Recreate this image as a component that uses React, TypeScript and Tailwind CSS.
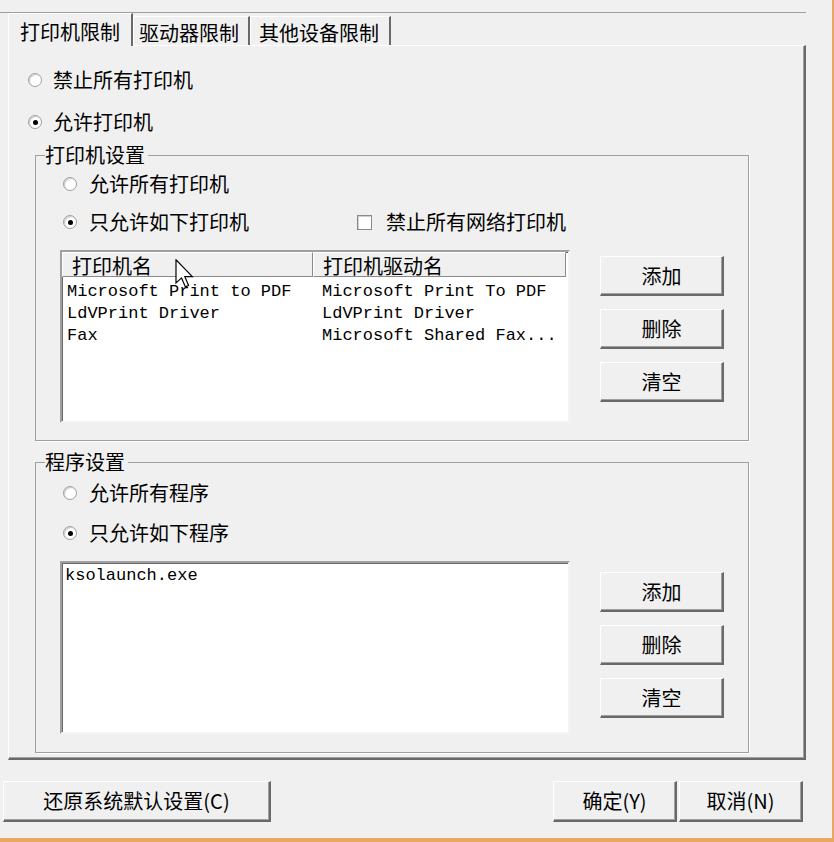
import React from "react";

const Radio = ({ checked }: { checked?: boolean }) => (
  <span className="w-[14px] h-[14px] rounded-full border border-[#a0a0a0] bg-white shadow-[inset_1px_1px_1px_#c8c8c8] flex items-center justify-center shrink-0">
    {checked ? <span className="w-[5px] h-[5px] rounded-full bg-black" /> : null}
  </span>
);

const Btn = ({ children, w = "w-[124px]", h = "h-[40px]" }: { children: React.ReactNode; w?: string; h?: string }) => (
  <div
    className={`${w} ${h} bg-[#f0f0f0] border-t border-l border-white border-r-2 border-b-2 border-r-[#696969] border-b-[#696969] shadow-[inset_-1px_-1px_0_#a0a0a0] flex items-center justify-center text-[20px] leading-[20px] text-black`}
  >
    {children}
  </div>
);

const SideButtons = () => (
  <div className="flex flex-col gap-[13px]">
    <Btn>添加</Btn>
    <Btn>删除</Btn>
    <Btn>清空</Btn>
  </div>
);

const rows = [
  ["Microsoft Print to PDF", "Microsoft Print To PDF"],
  ["LdVPrint Driver", "LdVPrint Driver"],
  ["Fax", "Microsoft Shared Fax..."],
];

const mono = "font-['Liberation_Mono',monospace] text-[17px] leading-[22px] text-black whitespace-pre";

export default function App() {
  return (
    <div className="relative w-[834px] h-[842px] bg-[#f0f0f0] border-r-2 border-b-4 border-r-[#e9a862] border-b-[#e9a862] flex flex-col font-['Noto_Sans_CJK_SC','Noto_Sans',sans-serif] text-[20px] leading-[20px] text-black overflow-hidden">
      {/* tab strip */}
      <div className="h-[45px] flex flex-col shrink-0">
        <div className="mt-[12px] h-px w-[806px] bg-[#a0a0a0]" />
        <div className="flex items-end h-[32px] pl-[8px]">
          <div className="relative z-10 -mb-px w-[125px] h-[33px] bg-[#f0f0f0] border-l border-t border-white border-r-2 border-r-[#696969] flex items-center pl-[11px] pt-[3px]">
            打印机限制
          </div>
          <div className="w-[117px] h-[29px] border-l border-t border-white border-r-2 border-r-[#696969] flex items-center pl-[5px] pt-[4px]">
            驱动器限制
          </div>
          <div className="w-[141px] h-[29px] border-l border-t border-white border-r-2 border-r-[#696969] flex items-center pl-[8px] pt-[4px]">
            其他设备限制
          </div>
        </div>
      </div>

      {/* tab page */}
      <div className="ml-[8px] w-[798px] h-[715px] shrink-0 border-l border-t border-white border-r-2 border-b-2 border-r-[#696969] border-b-[#696969] shadow-[inset_-1px_-1px_0_#a0a0a0] flex flex-col">
        <div className="mt-[23px] ml-[19px] h-[22px] flex items-center gap-[11px]">
          <Radio />
          <span>禁止所有打印机</span>
        </div>
        <div className="mt-[20px] ml-[19px] h-[22px] flex items-center gap-[11px]">
          <Radio checked />
          <span>允许打印机</span>
        </div>

        {/* group 1 */}
        <fieldset className="mt-[12px] ml-[26px] w-[714px] border border-[#a0a0a0] shadow-[1px_1px_0_#ffffff] pb-[17px]">
          <legend className="ml-[9px] pr-[3px] h-[20px] leading-[20px]">打印机设置</legend>
          <div className="mt-[8px] ml-[27px] h-[22px] flex items-center gap-[12px]">
            <Radio />
            <span>允许所有打印机</span>
          </div>
          <div className="mt-[16px] ml-[27px] h-[22px] flex items-center">
            <div className="w-[294px] flex items-center gap-[12px]">
              <Radio checked />
              <span>只允许如下打印机</span>
            </div>
            <div className="flex items-center gap-[14px]">
              <span className="w-[15px] h-[15px] bg-white border border-[#8a8a8a] shadow-[inset_1px_1px_0_#d0d0d0]" />
              <span>禁止所有网络打印机</span>
            </div>
          </div>
          <div className="mt-[17px] ml-[24px] flex items-start gap-[30px]">
            <div className="w-[510px] h-[173px] bg-white border-2 border-t-[#a0a0a0] border-l-[#a0a0a0] border-b-[#f4f4f4] border-r-[#f4f4f4] shadow-[inset_1px_1px_0_#696969] flex flex-col">
              <div className="flex h-[25px] shrink-0">
                <div className="w-[251px] h-full bg-[#f0f0f0] border-t border-l border-white border-r border-b border-r-[#8a8a8a] border-b-[#8a8a8a] flex items-center pl-[9px] pt-[2px]">
                  打印机名
                </div>
                <div className="w-[253px] h-full bg-[#f0f0f0] border-t border-l border-white border-r border-b border-r-[#8a8a8a] border-b-[#8a8a8a] flex items-center pl-[9px] pt-[2px]">
                  打印机驱动名
                </div>
              </div>
              <div className="pt-[4px] flex flex-col">
                {rows.map((r) => (
                  <div key={r[0]} className="flex h-[22px]">
                    <div className={`w-[251px] pl-[5px] ${mono}`}>{r[0]}</div>
                    <div className={`w-[253px] pl-[9px] ${mono}`}>{r[1]}</div>
                  </div>
                ))}
              </div>
            </div>
            <div className="mt-[6px]">
              <SideButtons />
            </div>
          </div>
        </fieldset>

        {/* group 2 */}
        <fieldset className="mt-[11px] ml-[26px] w-[714px] border border-[#a0a0a0] shadow-[1px_1px_0_#ffffff] pb-[18px]">
          <legend className="ml-[9px] pr-[3px] h-[20px] leading-[20px]">程序设置</legend>
          <div className="mt-[10px] ml-[27px] h-[22px] flex items-center gap-[12px]">
            <Radio />
            <span>允许所有程序</span>
          </div>
          <div className="mt-[18px] ml-[27px] h-[22px] flex items-center gap-[12px]">
            <Radio checked />
            <span>只允许如下程序</span>
          </div>
          <div className="mt-[17px] ml-[24px] flex items-start gap-[30px]">
            <div className="w-[510px] h-[173px] bg-white border-2 border-t-[#a0a0a0] border-l-[#a0a0a0] border-b-[#f4f4f4] border-r-[#f4f4f4] shadow-[inset_1px_1px_0_#696969] pt-[2px] pl-[3px]">
              <div className={mono}>ksolaunch.exe</div>
            </div>
            <div className="mt-[11px]">
              <SideButtons />
            </div>
          </div>
        </fieldset>
      </div>

      {/* bottom buttons */}
      <div className="mt-[21px] flex">
        <div className="ml-[3px]">
          <Btn w="w-[268px]" h="h-[41px]">还原系统默认设置(C)</Btn>
        </div>
        <div className="ml-[282px]">
          <Btn h="h-[41px]">确定(Y)</Btn>
        </div>
        <div className="ml-[2px]">
          <Btn h="h-[41px]">取消(N)</Btn>
        </div>
      </div>

      {/* mouse cursor */}
      <svg className="absolute left-[175px] top-[259px] pointer-events-none" width="20" height="30" viewBox="0 0 13 20">
        <path d="M0.5 0.5 L0.5 16 L4.2 12.6 L6.8 18.6 L8.9 17.7 L6.4 11.8 L11.4 11.8 Z" fill="#ffffff" stroke="#000000" strokeWidth="0.8" strokeLinejoin="miter" />
      </svg>
    </div>
  );
}
